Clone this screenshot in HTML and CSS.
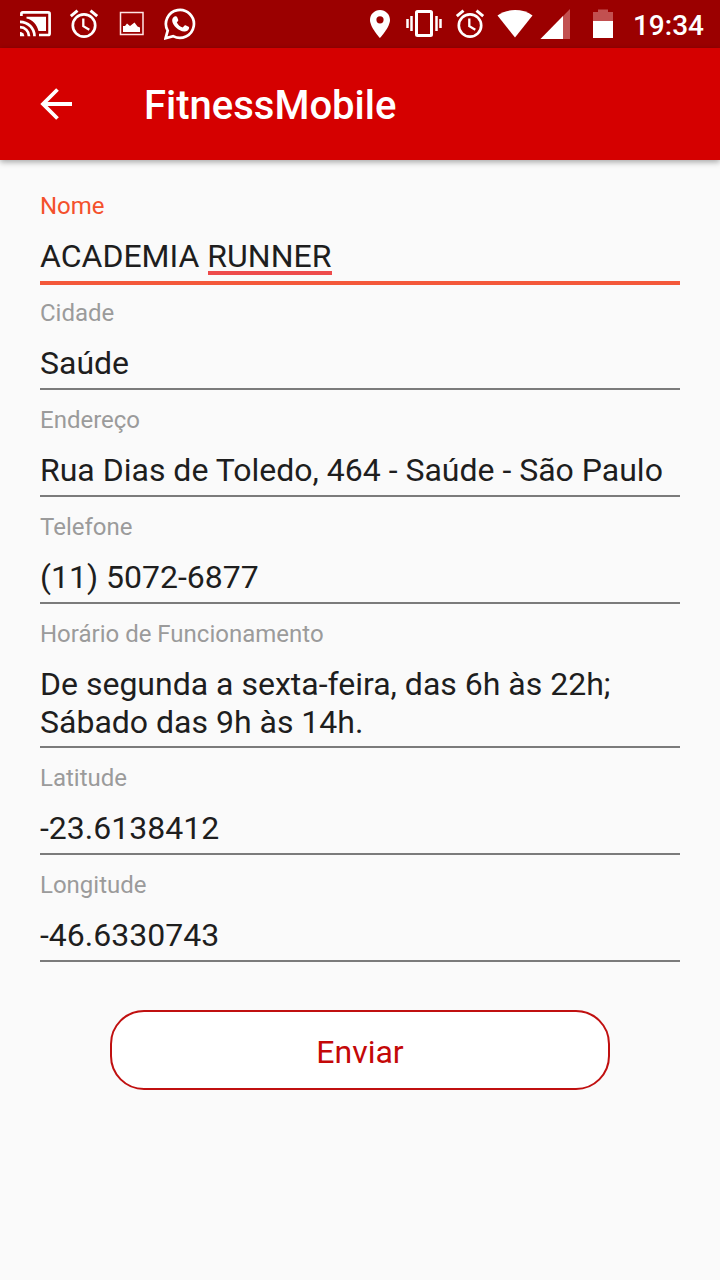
FILE: index.html
```html
<!DOCTYPE html>
<html lang="pt-BR">
<head>
<meta charset="utf-8">
<meta name="viewport" content="width=device-width, initial-scale=1">
<title>FitnessMobile</title>
<link rel="stylesheet" href="styles.css">
</head>
<body>
<div class="status-bar">
  <div class="notifications">
    <svg width="32" height="32" viewBox="0 0 32 32" fill="none" stroke="#fff" stroke-width="2.700">
      <path d="M1.400 8V5.900Q1.400 4.400 2.900 4.400H28.100Q29.600 4.400 29.600 5.900V25.500Q29.600 27 28.100 27H19"/>
      <path d="M6.500 8.800H26V23H18.500C17 16.500 12.500 11.500 6.500 10.500Z" fill="#fff" stroke="none"/>
      <path d="M0 13.800A14.500 14.500 0 0 1 14.500 28.300M0 19.200A9 9 0 0 1 9 28.300"/>
      <path d="M0 24A4.300 4.300 0 0 1 4.300 28.300H0Z" fill="#fff" stroke="none"/>
    </svg>
    <svg width="32" height="32" viewBox="0 0 32 32" fill="none" stroke="#fff" stroke-width="2.700">
      <circle cx="16" cy="17.500" r="11.200"/>
      <path d="M2.800 8.200L9.500 2.700M29.200 8.200L22.500 2.700" stroke-width="3"/>
      <path d="M15.300 10.500V18.200L21.300 21.800" stroke-width="2.300"/>
    </svg>
    <svg width="32" height="32" viewBox="0 0 32 32">
      <rect x="4.500" y="4.500" width="22.500" height="22" fill="none" stroke="#ffe4e4" stroke-width="1.500"/>
      <path d="M7 24V18L9 18L11 15.500L14 18L18.500 14.500L21.500 18.500L24 19.500V24Z" fill="#fff"/>
    </svg>
    <svg width="32" height="32" viewBox="0 0 32 32">
      <path d="M1.600 30.200L3.700 22.700A14 14 0 1 1 9.100 28.100Z" fill="none" stroke="#fff" stroke-width="2.700"/>
      <path d="M10.500 8.500C11.500 8 12.700 8 13.200 9.200L14.200 11.700C14.500 12.500 14 13.100 12.800 14.400C14.300 17 16 18.600 18.700 19.600L20.600 17.500C21 17.100 21.500 17.100 22 17.400L24.600 18.700C25.200 19 25.200 19.600 25 20.500C24.400 22.700 22.300 23.700 20.200 23.500C14.500 22.900 8.800 17.300 8.200 12.900C8 11 9 9.300 10.500 8.500Z" fill="#fff"/>
    </svg>
  </div>
  <div class="system">
    <svg width="40" height="32" viewBox="0 0 40 32">
      <path fill-rule="evenodd" d="M20 2C14.400 2 10 6.400 10 12C10 19.300 20 30 20 30S30 19.300 30 12C30 6.400 25.600 2 20 2ZM20 8.200A3.600 3.600 0 1 1 20 15.400A3.600 3.600 0 0 1 20 8.200Z" fill="#fff"/>
    </svg>
    <svg width="40" height="32" viewBox="0 0 40 32">
      <rect x="11.500" y="3.500" width="15" height="24" rx="1" fill="none" stroke="#fff" stroke-width="3"/>
      <path d="M2.500 11V20M6.500 8V23M31.500 8V23M35.500 11V20" stroke="#fff" stroke-width="2.500"/>
    </svg>
    <svg width="40" height="32" viewBox="0 0 40 32" fill="none" stroke="#fff" stroke-width="2.700">
      <circle cx="20" cy="17.500" r="11.200"/>
      <path d="M6.800 8.200L13.500 2.700M33.200 8.200L26.500 2.700" stroke-width="3"/>
      <path d="M19.300 10.500V18.200L25.300 21.800" stroke-width="2.300"/>
    </svg>
    <svg width="40" height="32" viewBox="0 0 40 32">
      <path d="M20 29.500L2.500 7.500C12 0.300 28 0.300 37.500 7.500Z" fill="#fff"/>
    </svg>
    <svg width="40" height="32" viewBox="0 0 40 32">
      <path d="M0.500 31L30 1V31Z" fill="#c25050"/>
      <path d="M0.500 31L23 8V31Z" fill="#fff"/>
    </svg>
    <svg width="40" height="32" viewBox="0 0 40 32">
      <path d="M8 4H13V1.500H23V4H28V13H8Z" fill="#c25050"/>
      <path d="M8 13H28V30H8Z" fill="#fff"/>
    </svg>
    <time class="clock">19:34</time>
  </div>
</div>

<header class="app-bar">
  <button class="back" type="button" aria-label="Voltar">
    <svg width="32" height="32" viewBox="0 0 32 32" fill="none" stroke="#fff" stroke-width="3.800">
      <path d="M32 16H3M17.500 1.500L3 16L17.500 30.500"/>
    </svg>
  </button>
  <h1 class="title">FitnessMobile</h1>
</header>

<form class="form">
  <div class="field field-active">
    <label class="label" for="nome">Nome</label>
    <input class="control" id="nome" type="text" value="ACADEMIA RUNNER" spellcheck="false">
    <span class="spelling-mark"></span>
  </div>
  <div class="field">
    <label class="label" for="cidade">Cidade</label>
    <input class="control" id="cidade" type="text" value="Saúde" spellcheck="false">
  </div>
  <div class="field">
    <label class="label" for="endereco">Endereço</label>
    <input class="control" id="endereco" type="text" value="Rua Dias de Toledo, 464 - Saúde - São Paulo" spellcheck="false">
  </div>
  <div class="field">
    <label class="label" for="telefone">Telefone</label>
    <input class="control" id="telefone" type="tel" value="(11) 5072-6877">
  </div>
  <div class="field">
    <label class="label" for="horario">Horário de Funcionamento</label>
    <textarea class="control" id="horario" rows="2" spellcheck="false">De segunda a sexta-feira, das 6h às 22h;
Sábado das 9h às 14h.</textarea>
  </div>
  <div class="field">
    <label class="label" for="latitude">Latitude</label>
    <input class="control" id="latitude" type="text" value="-23.6138412">
  </div>
  <div class="field">
    <label class="label" for="longitude">Longitude</label>
    <input class="control" id="longitude" type="text" value="-46.6330743">
  </div>
  <button class="submit" type="submit">Enviar</button>
</form>
</body>
</html>
```

FILE: styles.css
```css
* {
  box-sizing: border-box;
}

body {
  margin: 0;
  background: #fafafa;
  color: #1e1e1e;
  font-family: Roboto, "Liberation Sans", sans-serif;
}

.status-bar {
  display: flex;
  align-items: center;
  justify-content: space-between;
  height: 48px;
  padding: 0 16px 0 20px;
  background: #9b0000;
}

.notifications,
.system {
  display: flex;
  align-items: center;
}

.notifications {
  gap: 16px;
}

.system {
  gap: 5px;
}

.clock {
  margin-left: 3px;
  padding-top: 3px;
  color: #fff;
  font-size: 28px;
  font-weight: 500;
  line-height: 32px;
}

.app-bar {
  display: flex;
  align-items: center;
  gap: 72px;
  height: 112px;
  padding: 0 40px;
  background: #d50000;
  box-shadow: 0 2px 6px rgba(0, 0, 0, 0.35);
}

.back {
  display: flex;
  padding: 0;
  border: 0;
  background: none;
}

.title {
  margin: 0;
  padding-top: 4px;
  color: #fff;
  font-size: 40px;
  font-weight: 500;
  line-height: 48px;
}

.form {
  display: flex;
  flex-direction: column;
  padding: 32px 40px;
}

.field {
  position: relative;
  display: flex;
  flex-direction: column;
  gap: 17px;
  margin-bottom: 16px;
}

.label {
  color: #9b9b9b;
  font-size: 24px;
  line-height: 28px;
}

.control {
  display: block;
  width: 100%;
  margin: 0;
  padding: 0 0 6px;
  border: 0;
  border-bottom: 2px solid #7b7b7b;
  border-radius: 0;
  outline: 0;
  background: none;
  color: inherit;
  font: 32px/38px Roboto, "Liberation Sans", sans-serif;
  resize: none;
  overflow: hidden;
}

input.control {
  height: 46px;
}

textarea.control {
  padding-bottom: 5px;
}

.field-active {
  margin-bottom: 14px;
}

.field-active .label {
  color: #f4512c;
}

.field-active .control {
  height: 48px;
  border-bottom: 4px solid #f4583a;
}

.spelling-mark {
  position: absolute;
  left: 168px;
  bottom: 10px;
  width: 124px;
  height: 4px;
  background: #ee4b4b;
}

.submit {
  height: 80px;
  margin: 32px 70px 0;
  padding: 4px 0 0;
  border: 2px solid #c01010;
  border-radius: 34px;
  background: #fff;
  color: #c40808;
  font: 32px/38px Roboto, "Liberation Sans", sans-serif;
}
```
